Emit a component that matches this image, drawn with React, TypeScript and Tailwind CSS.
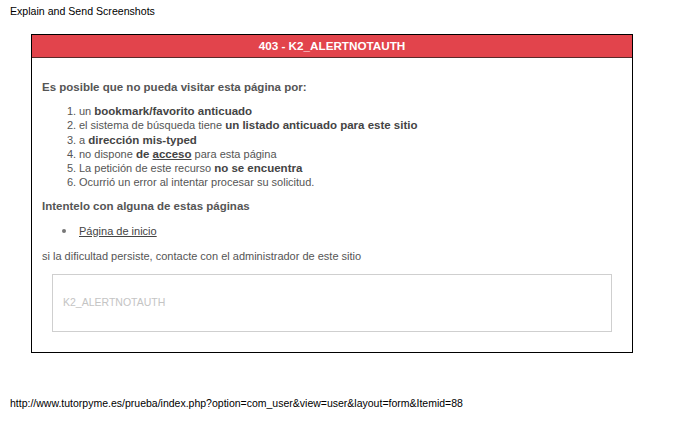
import React from "react";

export default function App() {
  const font = { fontFamily: '"Liberation Sans", Arial, sans-serif' };
  const b = "text-[11.5px] font-bold text-[#444]";
  return (
    <div className="w-[684px] h-[421px] bg-white relative overflow-hidden" style={font}>
      <div className="pl-[10px] pt-[5px] text-[10.6px] leading-[12px] text-black">Explain and Send Screenshots</div>
      <div className="ml-[31px] mt-[17px] w-[602px] h-[319px] border border-black flex flex-col">
        <div className="h-[23px] bg-[#e2444c] border-b border-[#5a2a2a] flex items-center justify-center text-white font-bold text-[11.7px]">
          403 - K2_ALERTNOTAUTH
        </div>
        <div className="pl-[10px] pt-[22px] text-[#555]">
          <div className="font-bold text-[11.5px] leading-[14px] text-[#555]">Es posible que no pueda visitar esta página por:</div>
          <ol className="mt-[10px] pl-[25px] text-[11px] leading-[14.3px]">
            <li className="flex"><span className="w-[12px]">1.</span><span>un <span className={b}>bookmark/favorito anticuado</span></span></li>
            <li className="flex"><span className="w-[12px]">2.</span><span>el sistema de búsqueda tiene <span className={b}>un listado anticuado para este sitio</span></span></li>
            <li className="flex"><span className="w-[12px]">3.</span><span>a <span className={b}>dirección mis-typed</span></span></li>
            <li className="flex"><span className="w-[12px]">4.</span><span>no dispone <span className={b}>de <u>acceso</u></span> para esta página</span></li>
            <li className="flex"><span className="w-[12px]">5.</span><span>La petición de este recurso <span className={b}>no se encuentra</span></span></li>
            <li className="flex"><span className="w-[12px]">6.</span><span>Ocurrió un error al intentar procesar su solicitud.</span></li>
          </ol>
          <div className="mt-[9px] font-bold text-[11.5px] leading-[14px]">Intentelo con alguna de estas páginas</div>
          <ul className="mt-[11px] pl-[20px] text-[11px] leading-[14px]">
            <li className="flex items-center"><span className="w-[4px] h-[4px] rounded-full bg-[#777] mr-[13px]"></span><span className="underline text-[#444]">Página de inicio</span></li>
          </ul>
          <div className="mt-[11px] text-[11px] leading-[14px]">si la dificultad persiste, contacte con el administrador de este sitio</div>
        </div>
        <div className="mx-[20px] mt-[11px] h-[58px] border border-[#cfcfcf] flex items-center pl-[10px] pt-[1px] text-[10.5px] text-[#c4c4c4]">
          K2_ALERTNOTAUTH
        </div>
      </div>
      <div className="absolute left-[10px] top-[397px] text-[10.5px] leading-[12px] text-black">
        http://www.tutorpyme.es/prueba/index.php?option=com_user&amp;view=user&amp;layout=form&amp;Itemid=88
      </div>
    </div>
  );
}
